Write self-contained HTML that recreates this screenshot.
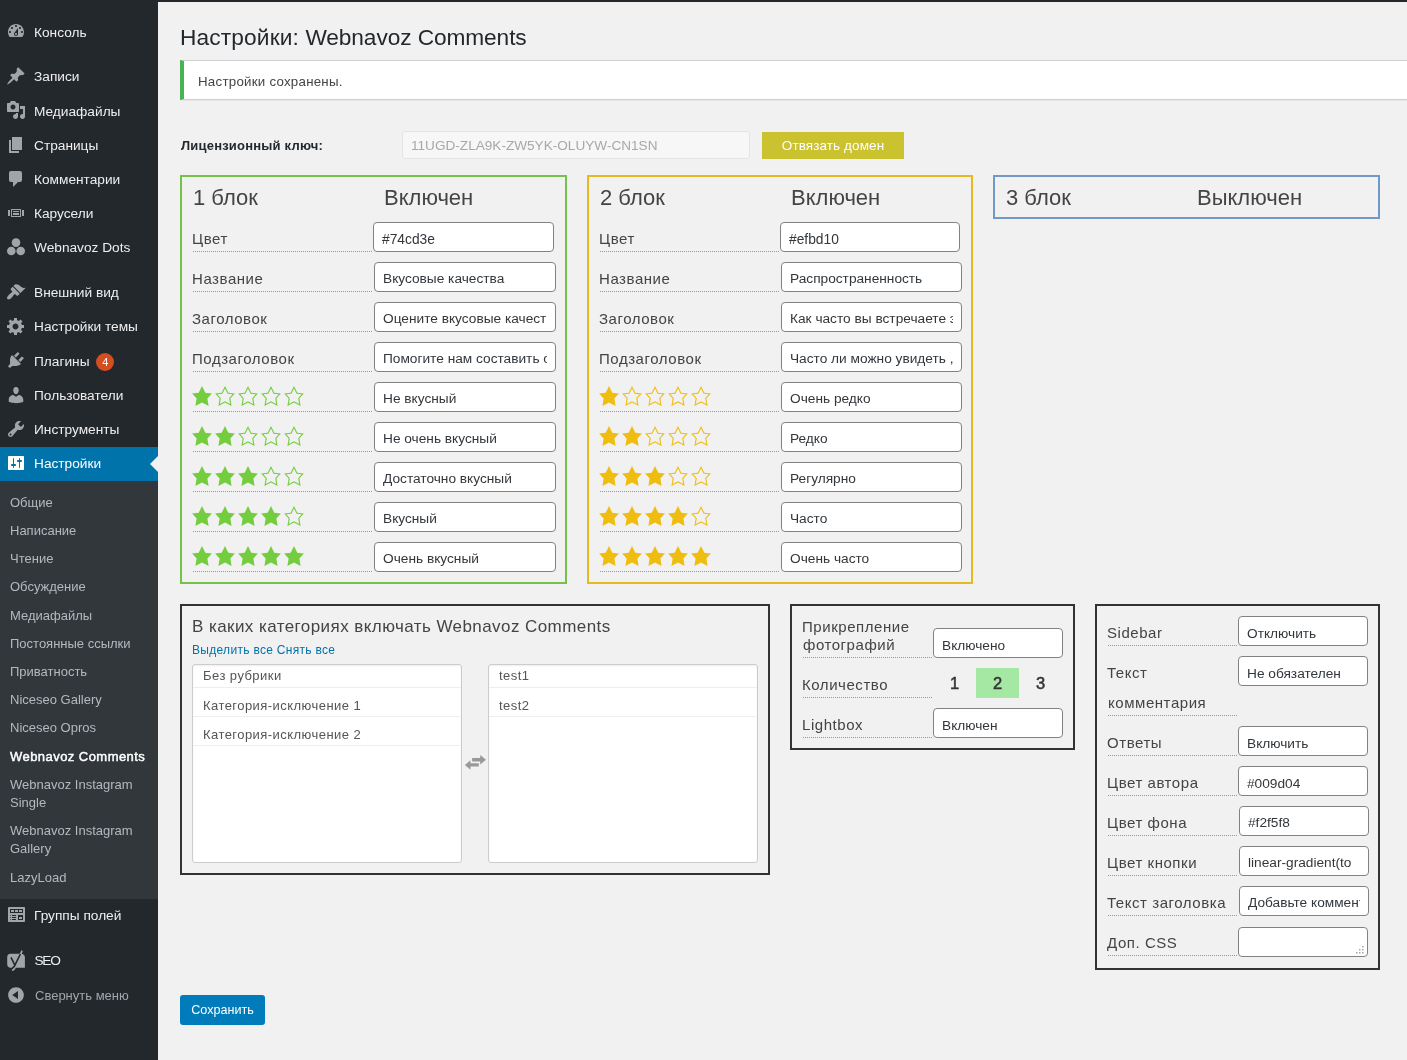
<!DOCTYPE html>
<html lang="ru"><head><meta charset="utf-8"><title>Настройки: Webnavoz Comments</title>
<style>
*{box-sizing:border-box;margin:0;padding:0}
html,body{width:1407px;height:1060px;overflow:hidden;background:#f1f1f1}
body{font-family:"Liberation Sans",sans-serif;font-size:13px;color:#444;position:relative}
#topbar{position:absolute;left:0;top:0;width:1407px;height:2px;background:#23282d;z-index:5}
#menubg{position:absolute;left:0;top:0;width:158px;height:1060px;background:#23282d}
#menu{position:absolute;left:0;top:0;width:158px;height:1060px;list-style:none;padding-top:15px;will-change:transform}
#menu .mi{height:34.2px;position:relative;color:#eee;font-size:13.7px}
#menu .mic{position:absolute;left:0;top:0;width:34px;height:34px}
#menu .ic{position:absolute;left:6px;top:6.4px;width:20px;height:20px;fill:#a0a5aa}
#menu .mt{position:absolute;left:34px;top:8.5px;line-height:18.2px;white-space:nowrap}
#menu .sep{height:10.7px}
#menu .act{background:#0073aa;color:#fff}
#menu .act .ic{fill:#fff}
#menu .act:after{content:"";position:absolute;right:0;top:9px;border:8px solid transparent;border-right-color:#f1f1f1}
#menu .badge{display:inline-block;background:#d54e21;color:#fff;font-size:11px;line-height:18px;height:18px;min-width:18px;text-align:center;border-radius:9px;margin:0 0 0 3px;vertical-align:top}
#menu .coll{color:#a0a5aa;font-size:13px}
#menu .subwrap{background:#32373c;padding:8px 0 7px}
#menu .sub{list-style:none}
#menu .sub li{padding:5px 0 5px 10px;font-size:13px;line-height:18.2px;color:#b4b9be}
#menu .sub li.cur{color:#fff;-webkit-text-stroke:.45px #fff;letter-spacing:.45px}
#content{position:absolute;left:0;top:0;width:1407px;height:1060px;will-change:transform}
h1{position:absolute;left:180px;top:22.5px;font-size:22.7px;font-weight:400;line-height:29px;color:#23282d;white-space:nowrap}
.notice{position:absolute;left:180px;top:60px;width:1240px;height:40px;background:#fff;border:1px solid #ccd0d4;border-left:4px solid #46b450;box-shadow:0 1px 1px rgba(0,0,0,.04)}
.notice p{position:absolute;left:14px;top:11px;line-height:19px;font-size:13.3px;letter-spacing:.25px;color:#444;white-space:nowrap}
.lic{position:absolute;left:180px;top:131px;height:28px;width:800px}
.lic .ll{position:absolute;left:1px;top:6px;font-weight:bold;font-size:13px;letter-spacing:.2px;line-height:18px;color:#23282d;white-space:nowrap}
.lic .key{position:absolute;left:222px;top:0;width:348px;height:28px;border:1px solid #e4e4e4;background:#f7f7f7;color:#a8a8a8;font-size:13.6px;line-height:28px;padding-left:8px;border-radius:3px}
.lic .unb{position:absolute;left:582px;top:1px;width:142px;height:27px;background:#cbc22f;color:#fff;font-size:13.5px;letter-spacing:.1px;line-height:27px;text-align:center}
.blk{position:absolute;top:175px;width:387px;border:2px solid #76c248;padding:0 10px}
.b1{left:180px;height:409px}
.b2{left:587px;width:386px;height:409px;border-color:#e6b822}
.b2 .row .inp{width:181px}
.b2 .row.first .inp{width:180px}
.b3{left:993px;height:44px;border-color:#7099c6}
.bh{height:35px;position:relative;font-size:22px;color:#444}
.bh span{position:absolute;top:7.5px;line-height:26px;white-space:nowrap}
.bh .t1{left:1px}.bh .t2{left:192px}
.row{position:relative;height:40px}
.row .lb{position:absolute;left:1px;top:0;width:179px;height:40px;border-bottom:1px dotted #999;font-size:15px;letter-spacing:.55px;line-height:20px;padding-top:16.5px;text-indent:-1px;color:#444;white-space:nowrap}
.row .inp{position:absolute;left:182px;top:10px;width:182px;height:30px;border:1px solid #828282;border-radius:4px;background:#fff;overflow:hidden;font-size:13.7px;color:#32373c;line-height:31px;padding:0 8px;white-space:nowrap}
.row .inp span{display:block;overflow:hidden;height:28px}
.row.first .inp{left:181px;width:181px;font-size:13.8px;line-height:34px}
.stars{display:block;height:22px;margin-top:-4px;margin-left:-2px;text-indent:0}
.stars svg{width:22px;height:22px;margin-right:1px;vertical-align:top}
.b1 .stars svg{fill:#74cd3e}
.b2 .stars svg{fill:#efbd10}
.box{position:absolute;border:2px solid #333;}
.cats{left:180px;top:604px;width:590px;height:271px}
.cats .ct{position:absolute;left:10px;top:9px;font-size:17px;letter-spacing:.43px;line-height:24px;color:#444;white-space:nowrap}
.cats .links{position:absolute;left:10px;top:35px;font-size:12px;letter-spacing:.3px;line-height:18px;color:#0073aa;white-space:nowrap}
.ms{position:absolute;top:58px;width:270px;height:199px;background:#fff;border:1px solid #ccc;border-radius:3px;box-shadow:inset 0 1px 2px rgba(0,0,0,.07)}
.ms1{left:10px}.ms2{left:306px}
.ms div{height:29px;border-bottom:1px solid #eee;padding-left:10px;font-size:13px;letter-spacing:.45px;line-height:36px;color:#555;white-space:nowrap}
.ms div:first-child{height:23px;line-height:21px}
.sw{position:absolute;left:282px;top:148px;width:23px;height:17px;fill:#999}
.photo{left:790px;top:604px;width:285px;height:146px;padding:2px 10px 0}
.side{left:1095px;top:604px;width:285px;height:366px;padding:0 10px}
.box .row .lb{width:129px;left:1px}
.box .row .inp{left:131px;width:130px;line-height:33px}
.box .row.two{height:50px;margin-top:0}
.box .row.two .lb{height:50px;line-height:18px;padding-top:9.5px}
.box .row.two .inp{top:20px}
.nums{position:absolute;left:131px;top:10px;height:30px;font-size:16.5px;color:#333}
.nums span{display:inline-block;width:43px;height:30px;line-height:31px;text-align:center;vertical-align:top}
.nums .on{background:#a4e8a4}
.box .row.tall{height:70px}
.box .row.tall .lb{height:70px;line-height:30px;padding-top:11.5px}
.grip{position:absolute;right:3px;bottom:2px;width:8px;height:8px;fill:#a5a5a5}
.save{position:absolute;left:180px;top:995px;width:85px;height:30px;background:#007cba;border-radius:3px;color:#fff;font-size:12.6px;line-height:31px;text-align:center}
.box .row.tx .inp{left:132px;line-height:31px}
.box .row.ta .inp{top:11px}
.nums span{-webkit-text-stroke:.5px #333}
#menu .yo{overflow:visible}
#menu .yk{fill:none;stroke:#23282d;stroke-width:1.6;stroke-linecap:butt}
#menu .seo .mt{letter-spacing:-1.3px;padding-left:.5px}
#menu .coll .ic{top:7.4px}
#menu .coll .mt{top:9.5px;left:35px}
h1 .c{letter-spacing:.15px}h1 .l{letter-spacing:-.09px}

</style></head><body>
<div id="topbar"></div>
<div id="menubg"></div>
<ul id="menu">
<li class="mi "><div class="mic"><svg class="ic" viewBox="0 0 20 20"><path fill-rule="evenodd" d="M3.76 16h12.48c1.1-1.37 1.76-3.11 1.76-5 0-4.42-3.58-8-8-8s-8 3.58-8 8c0 1.89.66 3.63 1.76 5zM10 4c.55 0 1 .45 1 1s-.45 1-1 1-1-.45-1-1 .45-1 1-1zM6 6c.55 0 1 .45 1 1s-.45 1-1 1-1-.45-1-1 .45-1 1-1zm8 0c.55 0 1 .45 1 1s-.45 1-1 1-1-.45-1-1 .45-1 1-1zm-5.37 5.55L12 7v6c0 1.1-.9 2-2 2s-2-.9-2-2c0-.57.24-1.08.63-1.45zM4 10c.55 0 1 .45 1 1s-.45 1-1 1-1-.45-1-1 .45-1 1-1zm12 0c.55 0 1 .45 1 1s-.45 1-1 1-1-.45-1-1 .45-1 1-1zm-5 3c0-.55-.45-1-1-1s-1 .45-1 1 .45 1 1 1 1-.45 1-1z"/></svg></div><div class="mt">Консоль</div></li>
<li class="sep"></li>
<li class="mi "><div class="mic"><svg class="ic" viewBox="0 0 20 20"><path fill-rule="evenodd" d="M10.44 3.02l1.82-1.82 6.36 6.35-1.83 1.82c-1.05-.68-2.48-.57-3.41.36l-.75.75c-.92.93-1.04 2.35-.35 3.41l-1.83 1.82-2.41-2.41-2.8 2.79c-.42.42-3.38 2.71-3.8 2.29s1.86-3.39 2.28-3.81l2.79-2.79L4.1 9.36l1.83-1.82c1.05.69 2.48.57 3.4-.36l.75-.75c.93-.92 1.05-2.35.36-3.41z"/></svg></div><div class="mt">Записи</div></li>
<li class="mi "><div class="mic"><svg class="ic" viewBox="0 0 20 20"><path fill-rule="evenodd" d="M13 11V4c0-.55-.45-1-1-1h-1.67L9 1H5L3.67 3H2c-.55 0-1 .45-1 1v7c0 .55.45 1 1 1h10c.55 0 1-.45 1-1zM7 4.5c1.38 0 2.5 1.12 2.5 2.5S8.38 9.5 7 9.5 4.5 8.38 4.5 7 5.62 4.5 7 4.5zM14 6h5v10.5c0 1.38-1.12 2.500-2.5 2.5S14 17.88 14 16.5s1.12-2.5 2.5-2.5c.17 0 .34.02.5.05V9h-3V6zm-4 8.05V13h2v3.5c0 1.38-1.12 2.5-2.5 2.5S7 17.88 7 16.5 8.12 14 9.5 14c.17 0 .34.02.5.05z"/></svg></div><div class="mt">Медиафайлы</div></li>
<li class="mi "><div class="mic"><svg class="ic" viewBox="0 0 20 20"><path fill-rule="evenodd" d="M6 15V2h10v13H6zm-1 1h8v2H3V5h2v11z"/></svg></div><div class="mt">Страницы</div></li>
<li class="mi "><div class="mic"><svg class="ic" viewBox="0 0 20 20"><path fill-rule="evenodd" d="M5 2h9c1.1 0 2 .9 2 2v7c0 1.1-.9 2-2 2h-2l-5 5v-5H5c-1.1 0-2-.9-2-2V4c0-1.1.9-2 2-2z"/></svg></div><div class="mt">Комментарии</div></li>
<li class="mi "><div class="mic"><svg class="ic" viewBox="0 0 20 20"><path fill-rule="evenodd" d="M5 14V6h10v8H5zm-3-1V7h2v6H2zm4-6v6h8V7H6zm10 0h2v6h-2V7zm-3 2V8H7v1h6zm0 3v-2H7v2h6z"/></svg></div><div class="mt">Карусели</div></li>
<li class="mi "><div class="mic"><svg class="ic" viewBox="0 0 20 20"><circle cx="10" cy="5.600" r="4.300"/><circle cx="5.300" cy="14" r="4.300"/><circle cx="14.700" cy="14" r="4.300"/></svg></div><div class="mt">Webnavoz Dots</div></li>
<li class="sep"></li>
<li class="mi "><div class="mic"><svg class="ic" viewBox="0 0 20 20"><path fill-rule="evenodd" d="M14.48 11.06L7.41 3.99l1.5-1.5c.5-.56 2.3-.47 3.51.32 1.21.8 1.43 1.28 2.91 2.1 1.18.64 2.45 1.26 4.45.85zm-.71.71L6.7 4.7 4.93 6.47c-.39.39-.39 1.02 0 1.41l1.06 1.06c.39.39.39 1.03 0 1.42-.6.6-1.43 1.11-2.21 1.69-.35.26-.7.53-1.01.84C1.43 14.23.4 16.08 1.4 17.07c.99 1 2.84-.03 4.18-1.36.31-.31.58-.66.85-1.02.57-.78 1.08-1.61 1.69-2.21.39-.39 1.02-.39 1.41 0l1.06 1.06c.39.39 1.02.39 1.41 0z"/></svg></div><div class="mt">Внешний вид</div></li>
<li class="mi "><div class="mic"><svg class="ic" viewBox="0 0 20 20"><path fill-rule="evenodd" d="M18 12h-2.18c-.17.7-.44 1.35-.81 1.93l1.54 1.54-2.1 2.1-1.54-1.54c-.58.36-1.23.63-1.91.79V19H8v-2.18c-.68-.16-1.33-.43-1.91-.79l-1.54 1.54-2.12-2.12 1.54-1.54c-.36-.58-.63-1.23-.79-1.91H1V9.030h2.17c.16-.7.44-1.35.8-1.94L2.43 5.55l2.1-2.1 1.54 1.54c.58-.37 1.24-.64 1.93-.81V2h3v2.18c.68.16 1.33.43 1.91.79l1.54-1.54 2.12 2.12-1.54 1.54c.36.59.64 1.24.8 1.94H18V12zm-8.5 1.5c1.66 0 3-1.34 3-3s-1.34-3-3-3-3 1.34-3 3 1.34 3 3 3z"/></svg></div><div class="mt">Настройки темы</div></li>
<li class="mi "><div class="mic"><svg class="ic" viewBox="0 0 20 20"><path fill-rule="evenodd" d="M13.11 4.36L9.87 7.6 8 5.73l3.24-3.24c.35-.34 1.05-.2 1.56.32.52.51.66 1.21.31 1.55zm-8 1.77l.91-1.12 9.01 9.01-1.19.84c-.71.71-2.63 1.16-3.82 1.16H6.14L4.9 17.26c-.59.59-1.54.59-2.12 0-.59-.58-.59-1.53 0-2.12l1.24-1.24v-3.88c0-1.13.4-3.19 1.09-3.890zm7.26 3.97l3.24-3.24c.34-.35 1.04-.21 1.55.31.52.51.66 1.21.31 1.55l-3.24 3.25z"/></svg></div><div class="mt">Плагины <span class="badge">4</span></div></li>
<li class="mi "><div class="mic"><svg class="ic" viewBox="0 0 20 20"><path fill-rule="evenodd" d="M10 9.25c-2.27 0-2.73-3.44-2.73-3.44C7 4.02 7.82 2 9.970 2c2.16 0 2.98 2.02 2.71 3.81 0 0-.41 3.44-2.68 3.44zm0 2.57L12.72 10c2.39 0 4.52 2.33 4.52 4.53v2.49s-3.65 1.13-7.24 1.13c-3.65 0-7.24-1.13-7.24-1.13v-2.49c0-2.25 1.94-4.48 4.47-4.48z"/></svg></div><div class="mt">Пользователи</div></li>
<li class="mi "><div class="mic"><svg class="ic" viewBox="0 0 20 20"><path fill-rule="evenodd" d="M16.68 9.77c-1.34 1.34-3.3 1.67-4.95.99l-5.41 6.52c-.99.99-2.59.99-3.58 0s-.99-2.59 0-3.57l6.52-5.42c-.68-1.65-.35-3.61.99-4.95 1.28-1.28 3.12-1.62 4.72-1.06l-2.89 2.89 2.82 2.82 2.86-2.87c.53 1.58.18 3.39-1.08 4.65zM3.81 16.21c.4.39 1.04.39 1.43 0 .4-.4.4-1.04 0-1.43-.39-.4-1.03-.4-1.43 0-.39.39-.39 1.03 0 1.43z"/></svg></div><div class="mt">Инструменты</div></li>
<li class="mi act"><div class="mic"><svg class="ic" viewBox="0 0 20 20"><path fill-rule="evenodd" d="M18 16V4c0-.55-.45-1-1-1H3c-.55 0-1 .45-1 1v12c0 .55.45 1 1 1h14c.55 0 1-.45 1-1zM8 11h1c.55 0 1 .45 1 1s-.45 1-1 1H8v1.500c0 .28-.22.5-.5.5s-.5-.22-.5-.5V13H6c-.55 0-1-.45-1-1s.45-1 1-1h1V5.500c0-.28.22-.5.5-.5s.5.22.5.5V11zm5-2h-1c-.55 0-1-.45-1-1s.45-1 1-1h1V5.500c0-.28.22-.5.5-.5s.5.22.5.5V7h1c.55 0 1 .45 1 1s-.45 1-1 1h-1v5.500c0 .28-.22.5-.5.5s-.5-.22-.5-.5V9z"/></svg></div><div class="mt">Настройки</div></li>
<li class="subwrap"><ul class="sub"><li>Общие</li><li>Написание</li><li>Чтение</li><li>Обсуждение</li><li>Медиафайлы</li><li>Постоянные ссылки</li><li>Приватность</li><li>Niceseo Gallery</li><li>Niceseo Opros</li><li class="cur">Webnavoz Comments</li><li>Webnavoz Instagram<br>Single</li><li>Webnavoz Instagram<br>Gallery</li><li>LazyLoad</li></ul></li>
<li class="mi "><div class="mic"><svg class="ic" viewBox="0 0 20 20"><path fill-rule="evenodd" d="M19 16V3c0-.55-.45-1-1-1H3c-.55 0-1 .45-1 1v13c0 .55.45 1 1 1h15c.55 0 1-.45 1-1zM4 4h13v4H4V4zm1 1v2h3V5H5zm4 0v2h3V5H9zm4 0v2h3V5h-3zm-8.500 5c.28 0 .5.22.5.5s-.22.5-.5.5-.5-.22-.5-.5.22-.5.5-.5zM6 10h4v1H6v-1zm6 0h5v5h-5v-5zm-7.500 2c.28 0 .5.22.5.5s-.22.5-.5.5-.5-.22-.5-.5.22-.5.5-.5zM6 12h4v1H6v-1zm7 0v2h3v-2h-3zm-8.500 2c.28 0 .5.22.5.5s-.22.5-.5.5-.5-.22-.5-.5.22-.5.5-.5zM6 14h4v1H6v-1z"/></svg></div><div class="mt">Группы полей</div></li>
<li class="sep"></li>
<li class="mi seo"><div class="mic"><svg class="ic yo" viewBox="0 0 20 20"><path d="M4.200 3.700h9.500l1.700-3.400 1.500.7-1.200 2.800c2 .3 3.200 1.600 3.200 3.500v10.400H9.800l-.6 1.300c-.7 1.300-1.700 1.900-3.300 2v-1.500c.8-.1 1.300-.5 1.600-1.200l.3-.6H4.600c-2 0-3.400-1.300-3.400-3.400V7.100c0-2 1.200-3.400 3-3.400z"/><path class="yk" d="M5 7.300l3.600 7.400M14.400 4L8.700 15.600c-.6 1.200-1.300 1.900-2.500 2.100"/></svg></div><div class="mt">SEO</div></li>
<li class="mi coll"><div class="mic"><svg class="ic" viewBox="0 0 20 20"><path fill-rule="evenodd" d="M10 2.160c4.33 0 7.84 3.51 7.84 7.84s-3.51 7.84-7.84 7.84S2.160 14.33 2.160 10 5.670 2.160 10 2.160zm2 11.72V6.120L6.180 9.970z"/></svg></div><div class="mt">Свернуть меню</div></li>
</ul>
<div id="content">
<h1><span class="c">Настройки:</span> <span class="l">Webnavoz Comments</span></h1>
<div class="notice"><p>Настройки сохранены.</p></div>
<div class="lic"><span class="ll">Лицензионный ключ:</span><div class="key">11UGD-ZLA9K-ZW5YK-OLUYW-CN1SN</div><div class="unb">Отвязать домен</div></div>
<div class="blk b1"><div class="bh"><span class="t1">1 блок</span><span class="t2">Включен</span></div><div class="row first"><div class="lb">Цвет</div><div class="inp"><span>#74cd3e</span></div></div><div class="row "><div class="lb">Название</div><div class="inp"><span>Вкусовые качества</span></div></div><div class="row "><div class="lb">Заголовок</div><div class="inp"><span>Оцените вкусовые качества</span></div></div><div class="row "><div class="lb">Подзаголовок</div><div class="inp"><span>Помогите нам составить оценку</span></div></div><div class="row st"><div class="lb"><span class="stars"><svg viewBox="0 0 20 20"><path fill-rule="evenodd" d="M10 1l3 6 6 .75-4.120 4.620L16 19l-6-3-6 3 1.130-6.630L1 7.750 7 7z"/></svg><svg viewBox="0 0 20 20"><path fill-rule="evenodd" d="M10 1L7 7l-6 .75 4.130 4.620L4 19l6-3 6 3-1.120-6.630L19 7.750 13 7zm0 2.240l2.340 4.690 4.650.58-3.180 3.560.870 5.150L10 14.880l-4.680 2.340.870-5.150-3.180-3.560 4.650-.58z"/></svg><svg viewBox="0 0 20 20"><path fill-rule="evenodd" d="M10 1L7 7l-6 .75 4.130 4.620L4 19l6-3 6 3-1.120-6.630L19 7.750 13 7zm0 2.240l2.340 4.690 4.650.58-3.180 3.560.870 5.150L10 14.880l-4.680 2.340.870-5.150-3.180-3.560 4.650-.58z"/></svg><svg viewBox="0 0 20 20"><path fill-rule="evenodd" d="M10 1L7 7l-6 .75 4.130 4.620L4 19l6-3 6 3-1.120-6.630L19 7.750 13 7zm0 2.240l2.340 4.690 4.650.58-3.180 3.560.870 5.150L10 14.880l-4.680 2.340.870-5.150-3.180-3.560 4.650-.58z"/></svg><svg viewBox="0 0 20 20"><path fill-rule="evenodd" d="M10 1L7 7l-6 .75 4.130 4.620L4 19l6-3 6 3-1.120-6.630L19 7.750 13 7zm0 2.240l2.340 4.690 4.650.58-3.180 3.560.870 5.150L10 14.880l-4.680 2.340.870-5.150-3.180-3.560 4.650-.58z"/></svg></span></div><div class="inp"><span>Не вкусный</span></div></div><div class="row st"><div class="lb"><span class="stars"><svg viewBox="0 0 20 20"><path fill-rule="evenodd" d="M10 1l3 6 6 .75-4.120 4.620L16 19l-6-3-6 3 1.130-6.630L1 7.750 7 7z"/></svg><svg viewBox="0 0 20 20"><path fill-rule="evenodd" d="M10 1l3 6 6 .75-4.120 4.620L16 19l-6-3-6 3 1.130-6.630L1 7.750 7 7z"/></svg><svg viewBox="0 0 20 20"><path fill-rule="evenodd" d="M10 1L7 7l-6 .75 4.130 4.620L4 19l6-3 6 3-1.120-6.630L19 7.750 13 7zm0 2.240l2.340 4.690 4.650.58-3.180 3.560.870 5.150L10 14.880l-4.680 2.340.870-5.150-3.180-3.560 4.650-.58z"/></svg><svg viewBox="0 0 20 20"><path fill-rule="evenodd" d="M10 1L7 7l-6 .75 4.130 4.620L4 19l6-3 6 3-1.120-6.630L19 7.750 13 7zm0 2.240l2.340 4.690 4.650.58-3.180 3.560.870 5.150L10 14.880l-4.680 2.340.870-5.150-3.180-3.560 4.650-.58z"/></svg><svg viewBox="0 0 20 20"><path fill-rule="evenodd" d="M10 1L7 7l-6 .75 4.130 4.620L4 19l6-3 6 3-1.120-6.630L19 7.750 13 7zm0 2.240l2.340 4.690 4.650.58-3.180 3.560.870 5.150L10 14.880l-4.680 2.340.870-5.150-3.180-3.560 4.650-.58z"/></svg></span></div><div class="inp"><span>Не очень вкусный</span></div></div><div class="row st"><div class="lb"><span class="stars"><svg viewBox="0 0 20 20"><path fill-rule="evenodd" d="M10 1l3 6 6 .75-4.120 4.620L16 19l-6-3-6 3 1.130-6.630L1 7.750 7 7z"/></svg><svg viewBox="0 0 20 20"><path fill-rule="evenodd" d="M10 1l3 6 6 .75-4.120 4.620L16 19l-6-3-6 3 1.130-6.630L1 7.750 7 7z"/></svg><svg viewBox="0 0 20 20"><path fill-rule="evenodd" d="M10 1l3 6 6 .75-4.120 4.620L16 19l-6-3-6 3 1.130-6.630L1 7.750 7 7z"/></svg><svg viewBox="0 0 20 20"><path fill-rule="evenodd" d="M10 1L7 7l-6 .75 4.130 4.620L4 19l6-3 6 3-1.120-6.630L19 7.750 13 7zm0 2.240l2.340 4.690 4.650.58-3.180 3.560.870 5.150L10 14.880l-4.680 2.340.870-5.150-3.180-3.560 4.650-.58z"/></svg><svg viewBox="0 0 20 20"><path fill-rule="evenodd" d="M10 1L7 7l-6 .75 4.130 4.620L4 19l6-3 6 3-1.120-6.630L19 7.750 13 7zm0 2.240l2.340 4.690 4.650.58-3.180 3.560.870 5.150L10 14.880l-4.680 2.340.870-5.150-3.180-3.560 4.650-.58z"/></svg></span></div><div class="inp"><span>Достаточно вкусный</span></div></div><div class="row st"><div class="lb"><span class="stars"><svg viewBox="0 0 20 20"><path fill-rule="evenodd" d="M10 1l3 6 6 .75-4.120 4.620L16 19l-6-3-6 3 1.130-6.630L1 7.750 7 7z"/></svg><svg viewBox="0 0 20 20"><path fill-rule="evenodd" d="M10 1l3 6 6 .75-4.120 4.620L16 19l-6-3-6 3 1.130-6.630L1 7.750 7 7z"/></svg><svg viewBox="0 0 20 20"><path fill-rule="evenodd" d="M10 1l3 6 6 .75-4.120 4.620L16 19l-6-3-6 3 1.130-6.630L1 7.750 7 7z"/></svg><svg viewBox="0 0 20 20"><path fill-rule="evenodd" d="M10 1l3 6 6 .75-4.120 4.620L16 19l-6-3-6 3 1.130-6.630L1 7.750 7 7z"/></svg><svg viewBox="0 0 20 20"><path fill-rule="evenodd" d="M10 1L7 7l-6 .75 4.130 4.620L4 19l6-3 6 3-1.120-6.630L19 7.750 13 7zm0 2.240l2.340 4.690 4.650.58-3.180 3.560.870 5.150L10 14.880l-4.680 2.340.870-5.150-3.180-3.560 4.650-.58z"/></svg></span></div><div class="inp"><span>Вкусный</span></div></div><div class="row st"><div class="lb"><span class="stars"><svg viewBox="0 0 20 20"><path fill-rule="evenodd" d="M10 1l3 6 6 .75-4.120 4.620L16 19l-6-3-6 3 1.130-6.630L1 7.750 7 7z"/></svg><svg viewBox="0 0 20 20"><path fill-rule="evenodd" d="M10 1l3 6 6 .75-4.120 4.620L16 19l-6-3-6 3 1.130-6.630L1 7.750 7 7z"/></svg><svg viewBox="0 0 20 20"><path fill-rule="evenodd" d="M10 1l3 6 6 .75-4.120 4.620L16 19l-6-3-6 3 1.130-6.630L1 7.750 7 7z"/></svg><svg viewBox="0 0 20 20"><path fill-rule="evenodd" d="M10 1l3 6 6 .75-4.120 4.620L16 19l-6-3-6 3 1.130-6.630L1 7.750 7 7z"/></svg><svg viewBox="0 0 20 20"><path fill-rule="evenodd" d="M10 1l3 6 6 .75-4.120 4.620L16 19l-6-3-6 3 1.130-6.630L1 7.750 7 7z"/></svg></span></div><div class="inp"><span>Очень вкусный</span></div></div></div>
<div class="blk b2"><div class="bh"><span class="t1">2 блок</span><span class="t2">Включен</span></div><div class="row first"><div class="lb">Цвет</div><div class="inp"><span>#efbd10</span></div></div><div class="row "><div class="lb">Название</div><div class="inp"><span>Распространенность</span></div></div><div class="row "><div class="lb">Заголовок</div><div class="inp"><span>Как часто вы встречаете это</span></div></div><div class="row "><div class="lb">Подзаголовок</div><div class="inp"><span>Часто ли можно увидеть , это</span></div></div><div class="row st"><div class="lb"><span class="stars"><svg viewBox="0 0 20 20"><path fill-rule="evenodd" d="M10 1l3 6 6 .75-4.120 4.620L16 19l-6-3-6 3 1.130-6.630L1 7.750 7 7z"/></svg><svg viewBox="0 0 20 20"><path fill-rule="evenodd" d="M10 1L7 7l-6 .75 4.130 4.620L4 19l6-3 6 3-1.120-6.630L19 7.750 13 7zm0 2.240l2.340 4.690 4.650.58-3.180 3.560.870 5.150L10 14.880l-4.680 2.340.870-5.150-3.180-3.560 4.650-.58z"/></svg><svg viewBox="0 0 20 20"><path fill-rule="evenodd" d="M10 1L7 7l-6 .75 4.130 4.620L4 19l6-3 6 3-1.120-6.630L19 7.750 13 7zm0 2.240l2.340 4.690 4.650.58-3.180 3.560.870 5.150L10 14.880l-4.680 2.340.870-5.150-3.180-3.560 4.650-.58z"/></svg><svg viewBox="0 0 20 20"><path fill-rule="evenodd" d="M10 1L7 7l-6 .75 4.130 4.620L4 19l6-3 6 3-1.120-6.630L19 7.750 13 7zm0 2.240l2.340 4.690 4.650.58-3.180 3.560.870 5.150L10 14.880l-4.680 2.340.870-5.150-3.180-3.560 4.650-.58z"/></svg><svg viewBox="0 0 20 20"><path fill-rule="evenodd" d="M10 1L7 7l-6 .75 4.130 4.620L4 19l6-3 6 3-1.120-6.630L19 7.750 13 7zm0 2.240l2.340 4.690 4.650.58-3.180 3.560.870 5.150L10 14.880l-4.680 2.340.870-5.150-3.180-3.560 4.650-.58z"/></svg></span></div><div class="inp"><span>Очень редко</span></div></div><div class="row st"><div class="lb"><span class="stars"><svg viewBox="0 0 20 20"><path fill-rule="evenodd" d="M10 1l3 6 6 .75-4.120 4.620L16 19l-6-3-6 3 1.130-6.630L1 7.750 7 7z"/></svg><svg viewBox="0 0 20 20"><path fill-rule="evenodd" d="M10 1l3 6 6 .75-4.120 4.620L16 19l-6-3-6 3 1.130-6.630L1 7.750 7 7z"/></svg><svg viewBox="0 0 20 20"><path fill-rule="evenodd" d="M10 1L7 7l-6 .75 4.130 4.620L4 19l6-3 6 3-1.120-6.630L19 7.750 13 7zm0 2.240l2.340 4.690 4.650.58-3.180 3.560.870 5.150L10 14.880l-4.680 2.340.870-5.150-3.180-3.560 4.650-.58z"/></svg><svg viewBox="0 0 20 20"><path fill-rule="evenodd" d="M10 1L7 7l-6 .75 4.130 4.620L4 19l6-3 6 3-1.120-6.630L19 7.750 13 7zm0 2.240l2.340 4.690 4.650.58-3.180 3.560.870 5.150L10 14.880l-4.680 2.340.870-5.150-3.180-3.560 4.650-.58z"/></svg><svg viewBox="0 0 20 20"><path fill-rule="evenodd" d="M10 1L7 7l-6 .75 4.130 4.620L4 19l6-3 6 3-1.120-6.630L19 7.750 13 7zm0 2.240l2.340 4.690 4.650.58-3.180 3.560.870 5.150L10 14.880l-4.680 2.340.870-5.150-3.180-3.560 4.650-.58z"/></svg></span></div><div class="inp"><span>Редко</span></div></div><div class="row st"><div class="lb"><span class="stars"><svg viewBox="0 0 20 20"><path fill-rule="evenodd" d="M10 1l3 6 6 .75-4.120 4.620L16 19l-6-3-6 3 1.130-6.630L1 7.750 7 7z"/></svg><svg viewBox="0 0 20 20"><path fill-rule="evenodd" d="M10 1l3 6 6 .75-4.120 4.620L16 19l-6-3-6 3 1.130-6.630L1 7.750 7 7z"/></svg><svg viewBox="0 0 20 20"><path fill-rule="evenodd" d="M10 1l3 6 6 .75-4.120 4.620L16 19l-6-3-6 3 1.130-6.630L1 7.750 7 7z"/></svg><svg viewBox="0 0 20 20"><path fill-rule="evenodd" d="M10 1L7 7l-6 .75 4.130 4.620L4 19l6-3 6 3-1.120-6.630L19 7.750 13 7zm0 2.240l2.340 4.690 4.650.58-3.180 3.560.870 5.150L10 14.880l-4.680 2.340.870-5.150-3.180-3.560 4.650-.58z"/></svg><svg viewBox="0 0 20 20"><path fill-rule="evenodd" d="M10 1L7 7l-6 .75 4.130 4.620L4 19l6-3 6 3-1.120-6.630L19 7.750 13 7zm0 2.240l2.340 4.690 4.650.58-3.180 3.560.870 5.150L10 14.880l-4.680 2.340.870-5.150-3.180-3.560 4.650-.58z"/></svg></span></div><div class="inp"><span>Регулярно</span></div></div><div class="row st"><div class="lb"><span class="stars"><svg viewBox="0 0 20 20"><path fill-rule="evenodd" d="M10 1l3 6 6 .75-4.120 4.620L16 19l-6-3-6 3 1.130-6.630L1 7.750 7 7z"/></svg><svg viewBox="0 0 20 20"><path fill-rule="evenodd" d="M10 1l3 6 6 .75-4.120 4.620L16 19l-6-3-6 3 1.130-6.630L1 7.750 7 7z"/></svg><svg viewBox="0 0 20 20"><path fill-rule="evenodd" d="M10 1l3 6 6 .75-4.120 4.620L16 19l-6-3-6 3 1.130-6.630L1 7.750 7 7z"/></svg><svg viewBox="0 0 20 20"><path fill-rule="evenodd" d="M10 1l3 6 6 .75-4.120 4.620L16 19l-6-3-6 3 1.130-6.630L1 7.750 7 7z"/></svg><svg viewBox="0 0 20 20"><path fill-rule="evenodd" d="M10 1L7 7l-6 .75 4.130 4.620L4 19l6-3 6 3-1.120-6.630L19 7.750 13 7zm0 2.240l2.340 4.690 4.650.58-3.180 3.560.870 5.150L10 14.880l-4.680 2.340.870-5.150-3.180-3.560 4.650-.58z"/></svg></span></div><div class="inp"><span>Часто</span></div></div><div class="row st"><div class="lb"><span class="stars"><svg viewBox="0 0 20 20"><path fill-rule="evenodd" d="M10 1l3 6 6 .75-4.120 4.620L16 19l-6-3-6 3 1.130-6.630L1 7.750 7 7z"/></svg><svg viewBox="0 0 20 20"><path fill-rule="evenodd" d="M10 1l3 6 6 .75-4.120 4.620L16 19l-6-3-6 3 1.130-6.630L1 7.750 7 7z"/></svg><svg viewBox="0 0 20 20"><path fill-rule="evenodd" d="M10 1l3 6 6 .75-4.120 4.620L16 19l-6-3-6 3 1.130-6.630L1 7.750 7 7z"/></svg><svg viewBox="0 0 20 20"><path fill-rule="evenodd" d="M10 1l3 6 6 .75-4.120 4.620L16 19l-6-3-6 3 1.130-6.630L1 7.750 7 7z"/></svg><svg viewBox="0 0 20 20"><path fill-rule="evenodd" d="M10 1l3 6 6 .75-4.120 4.620L16 19l-6-3-6 3 1.130-6.630L1 7.750 7 7z"/></svg></span></div><div class="inp"><span>Очень часто</span></div></div></div>
<div class="blk b3"><div class="bh"><span class="t1">3 блок</span><span class="t2">Выключен</span></div></div>
<div class="box cats"><div class="ct">В каких категориях включать Webnavoz Comments</div>
<div class="links"><span>Выделить все</span> <span>Снять все</span></div>
<div class="ms ms1"><div>Без рубрики</div><div>Категория-исключение 1</div><div>Категория-исключение 2</div></div>
<svg class="sw" viewBox="464 754 23 17"><path d="M472.100 758h8.100v-3l5.800 4.800-5.800 4.700v-2.900h-8.100z"/><path d="M478.800 763.300h-8.300v-3.100l-5.600 4.800 5.600 4.700v-3.100h8.300z"/></svg>
<div class="ms ms2"><div>test1</div><div>test2</div></div></div>
<div class="box photo"><div class="row two"><div class="lb">Прикрепление<br>фотографий</div><div class="inp"><span>Включено</span></div></div><div class="row cnt"><div class="lb">Количество</div><div class="nums"><span>1</span><span class="on">2</span><span>3</span></div></div><div class="row "><div class="lb">Lightbox</div><div class="inp"><span>Включен</span></div></div></div>
<div class="box side"><div class="row "><div class="lb">Sidebar</div><div class="inp"><span>Отключить</span></div></div><div class="row tall"><div class="lb">Текст<br>комментария</div><div class="inp"><span>Не обязателен</span></div></div><div class="row "><div class="lb">Ответы</div><div class="inp"><span>Включить</span></div></div><div class="row "><div class="lb">Цвет автора</div><div class="inp"><span>#009d04</span></div></div><div class="row tx"><div class="lb">Цвет фона</div><div class="inp"><span>#f2f5f8</span></div></div><div class="row tx"><div class="lb">Цвет кнопки</div><div class="inp"><span>linear-gradient(to</span></div></div><div class="row tx"><div class="lb">Текст заголовка</div><div class="inp"><span>Добавьте комментарий</span></div></div><div class="row ta"><div class="lb">Доп. CSS</div><div class="inp"><svg class="grip" viewBox="0 0 8 8"><path d="M6 0h1.500v1.500H6zM6 3h1.500v1.500H6zM3 3h1.500v1.500H3zM6 6h1.500v1.500H6zM3 6h1.500v1.500H3zM0 6h1.500v1.500H0z"/></svg></div></div></div>
<div class="save">Сохранить</div>
</div>
</body></html>
